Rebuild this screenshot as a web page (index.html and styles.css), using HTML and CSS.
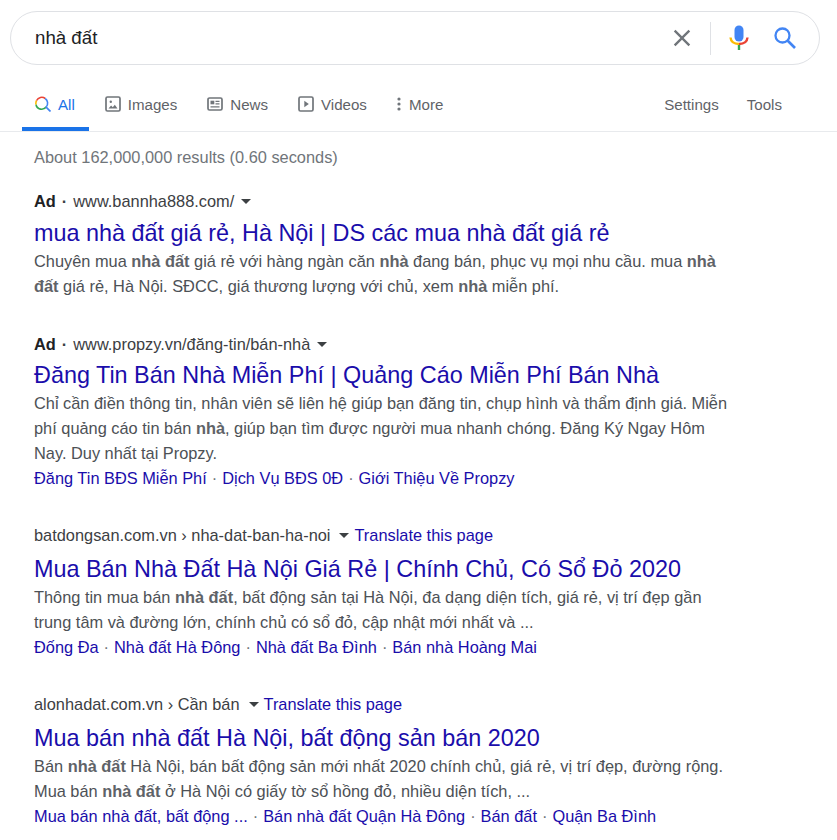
FILE: index.html
```html
<!DOCTYPE html>
<html lang="vi">
<head>
    <meta charset="UTF-8">
    <meta name="viewport" content="width=device-width, initial-scale=1.0">
    <title>nhà đất - Search</title>
    <link rel="stylesheet" href="styles.css">
</head>
<body>

    <!-- Search Box -->
    <div class="search-box">
        <span class="query">nhà đất</span>
        <svg class="icon-clear" width="28" height="28" viewBox="0 0 24 24"><path fill="#70757a" d="M19 6.41 17.59 5 12 10.59 6.41 5 5 6.41 10.59 12 5 17.59 6.41 19 12 13.41 17.59 19 19 17.59 13.41 12z"/></svg>
        <span class="box-divider"></span>
        <svg class="icon-mic" width="20" height="26" viewBox="0 0 20 26">
            <rect x="5.500" y="0.500" width="9" height="16" rx="4.500" fill="#4285f4"/>
            <path d="M1.500 12.500c.4 4 3.600 6.500 8.500 6.500" fill="none" stroke="#fbbc05" stroke-width="2.400"/>
            <path d="M10 19c4.900 0 8.100-2.500 8.500-6.500" fill="none" stroke="#ea4335" stroke-width="2.400"/>
            <rect x="8.800" y="20" width="2.400" height="5" fill="#34a853"/>
        </svg>
        <svg class="icon-search" width="22" height="22" viewBox="0 0 22 22"><circle cx="8.500" cy="8.500" r="7" fill="none" stroke="#4285f4" stroke-width="2.300"/><path d="M13.500 13.500 21 21" stroke="#4285f4" stroke-width="2.700" fill="none"/></svg>
    </div>

    <!-- Tabs -->
    <div class="tabs">
        <a class="tab active">
            <svg width="16" height="16" viewBox="0 0 16 16">
                <path d="M11.300 10.800A5.700 5.700 0 0 1 1 8.500" fill="none" stroke="#34a853" stroke-width="1.600"/>
                <path d="M1 8.500a5.700 5.700 0 0 1 .6-4" fill="none" stroke="#fbbc05" stroke-width="1.600"/>
                <path d="M1.600 4.500a5.700 5.700 0 0 1 8.600-2" fill="none" stroke="#ea4335" stroke-width="1.600"/>
                <path d="M10.200 2.500a5.700 5.700 0 0 1 1.100 8.300" fill="none" stroke="#4285f4" stroke-width="1.600"/>
                <path d="M10.800 10.800l4.700 4.700" stroke="#4285f4" stroke-width="1.700" fill="none"/>
            </svg>
            All
        </a>
        <a class="tab">
            <svg width="16" height="16" viewBox="0 0 16 16"><rect x="1" y="1" width="14" height="14" rx="1.500" fill="none" stroke="#70757a" stroke-width="1.700"/><circle cx="5.800" cy="5.800" r="1.200" fill="#70757a"/><path d="M3.500 12.500l2.600-3 1.700 1.800 2-2.500 2.700 3.700z" fill="#70757a"/></svg>
            Images
        </a>
        <a class="tab">
            <svg width="16" height="16" viewBox="0 0 16 16"><rect x="1" y="2" width="14" height="12" rx="1.500" fill="none" stroke="#70757a" stroke-width="1.700"/><rect x="3.500" y="4.700" width="3.800" height="3.600" fill="#70757a"/><path d="M8.500 5.300h4M8.500 7.800h4M3.500 10.900h9" stroke="#70757a" stroke-width="1.300" fill="none"/></svg>
            News
        </a>
        <a class="tab">
            <svg width="16" height="16" viewBox="0 0 16 16"><rect x="1" y="1" width="14" height="14" rx="1.500" fill="none" stroke="#70757a" stroke-width="1.700"/><path d="M6.300 4.800v6.400l4.500-3.200z" fill="#70757a"/></svg>
            Videos
        </a>
        <a class="tab tab-more">
            <svg width="4" height="14" viewBox="0 0 4 14"><circle cx="2" cy="2" r="1.600" fill="#70757a"/><circle cx="2" cy="7" r="1.600" fill="#70757a"/><circle cx="2" cy="12" r="1.600" fill="#70757a"/></svg>
            More
        </a>
        <a class="tab tab-settings">Settings</a>
        <a class="tab tab-tools">Tools</a>
    </div>

    <!-- Results -->
    <div class="results">
        <p class="stats">About 162,000,000 results (0.60 seconds)</p>

        <div class="result ad">
            <div class="cite"><b class="ad-label">Ad</b><span class="ad-dot">·</span>www.bannha888.com/<span class="caret"></span></div>
            <h3>mua nhà đất giá rẻ, Hà Nội | DS các mua nhà đất giá rẻ</h3>
            <p class="snippet">Chuyên mua <b>nhà đất</b> giá rẻ với hàng ngàn căn <b>nhà</b> đang bán, phục vụ mọi nhu cầu. mua <b>nhà đất</b> giá rẻ, Hà Nội. SĐCC, giá thương lượng với chủ, xem <b>nhà</b> miễn phí.</p>
        </div>

        <div class="result ad">
            <div class="cite"><b class="ad-label">Ad</b><span class="ad-dot">·</span>www.propzy.vn/đăng-tin/bán-nhà<span class="caret"></span></div>
            <h3>Đăng Tin Bán Nhà Miễn Phí | Quảng Cáo Miễn Phí Bán Nhà</h3>
            <p class="snippet">Chỉ cần điền thông tin, nhân viên sẽ liên hệ giúp bạn đăng tin, chụp hình và thẩm định giá. Miễn phí quảng cáo tin bán <b>nhà</b>, giúp bạn tìm được người mua nhanh chóng. Đăng Ký Ngay Hôm Nay. Duy nhất tại Propzy.</p>
            <div class="sitelinks"><a>Đăng Tin BĐS Miễn Phí</a><i>·</i><a>Dịch Vụ BĐS 0Đ</a><i>·</i><a>Giới Thiệu Về Propzy</a></div>
        </div>

        <div class="result">
            <div class="cite">batdongsan.com.vn › nha-dat-ban-ha-noi<span class="caret"></span><a class="translate">Translate this page</a></div>
            <h3>Mua Bán Nhà Đất Hà Nội Giá Rẻ | Chính Chủ, Có Sổ Đỏ 2020</h3>
            <p class="snippet">Thông tin mua bán <b>nhà đất</b>, bất động sản tại Hà Nội, đa dạng diện tích, giá rẻ, vị trí đẹp gần trung tâm và đường lớn, chính chủ có sổ đỏ, cập nhật mới nhất và ...</p>
            <div class="sitelinks"><a>Đống Đa</a><i>·</i><a>Nhà đất Hà Đông</a><i>·</i><a>Nhà đất Ba Đình</a><i>·</i><a>Bán nhà Hoàng Mai</a></div>
        </div>

        <div class="result">
            <div class="cite">alonhadat.com.vn › Cần bán<span class="caret"></span><a class="translate">Translate this page</a></div>
            <h3>Mua bán nhà đất Hà Nội, bất động sản bán 2020</h3>
            <p class="snippet">Bán <b>nhà đất</b> Hà Nội, bán bất động sản mới nhất 2020 chính chủ, giá rẻ, vị trí đẹp, đường rộng. Mua bán <b>nhà đất</b> ở Hà Nội có giấy tờ sổ hồng đỏ, nhiều diện tích, ...</p>
            <div class="sitelinks"><a>Mua bán nhà đất, bất động ...</a><i>·</i><a>Bán nhà đất Quận Hà Đông</a><i>·</i><a>Bán đất</a><i>·</i><a>Quận Ba Đình</a></div>
        </div>
    </div>

</body>
</html>
```

FILE: styles.css
```css
/* Global Styles */
* {
    margin: 0;
    padding: 0;
    box-sizing: border-box;
}

html, body {
    height: 840px;
    overflow: hidden;
}

body {
    font-family: "Liberation Sans", Arial, sans-serif;
    background-color: #ffffff;
    color: #4d5156;
}

/* Search Box */
.search-box {
    display: flex;
    align-items: center;
    width: 810px;
    height: 54px;
    margin: 11px 0 0 10px;
    padding-left: 24px;
    border: 1px solid #dfe1e5;
    border-radius: 27px;
}

.query {
    flex: 1;
    font-size: 18.7px;
    color: #202124;
}

.icon-clear {
    margin-right: 14px;
}

.box-divider {
    width: 1px;
    height: 33px;
    background-color: #dfe1e5;
}

.icon-mic {
    margin-left: 18px;
}

.icon-search {
    margin: 0 23px 0 25px;
}

/* Tabs */
.tabs {
    display: flex;
    height: 67px;
    padding-left: 22px;
    border-bottom: 1px solid #e8eaed;
}

.tab {
    display: flex;
    align-items: center;
    gap: 7px;
    height: 66px;
    padding: 12px 15px 0;
    font-size: 15.1px;
    color: #5f6368;
}

.tab.active {
    color: #1a73e8;
    border-bottom: 4px solid #1a73e8;
    padding: 16px 14px 0 13px;
    margin-right: 1px;
}

.tab-more {
    gap: 8px;
}

.tab-settings {
    margin-left: auto;
    padding-right: 14px;
}

.tab-tools {
    padding-left: 14px;
    padding-right: 0;
    margin-right: 55px;
}

/* Results */
.results {
    width: 700px;
    margin-left: 34px;
}

.stats {
    margin-top: 15px;
    font-size: 16.38px;
    line-height: 20px;
    color: #70757a;
}

.result {
    margin-bottom: 34px;
}

.stats + .result {
    margin-top: 24px;
    margin-bottom: 35px;
}

.cite {
    display: flex;
    align-items: center;
    height: 20px;
    font-size: 16.38px;
    color: #3c4043;
}

.ad-label {
    color: #202124;
}

.ad-dot {
    margin: 0 6px;
    font-weight: bold;
}

.caret {
    width: 0;
    height: 0;
    margin: 0 5px 0 9px;
    border-top: 5px solid #3c4043;
    border-left: 5px solid transparent;
    border-right: 5px solid transparent;
}

.ad .caret {
    margin-left: 7px;
}

.translate {
    color: #1a0dab;
}

h3 {
    margin-top: 9px;
    font-size: 23.4px;
    font-weight: normal;
    line-height: 31px;
    color: #1a0dab;
    white-space: nowrap;
}

.ad h3 {
    margin-top: 6px;
}

.stats + .result h3 {
    margin-top: 7px;
}

.snippet {
    font-size: 16.38px;
    line-height: 25px;
}

.snippet b {
    color: #5f6368;
}

.sitelinks {
    font-size: 16.38px;
    line-height: 25px;
    color: #1a0dab;
}

.sitelinks i {
    font-style: normal;
    margin: 0 5px;
    color: #70757a;
}
```
